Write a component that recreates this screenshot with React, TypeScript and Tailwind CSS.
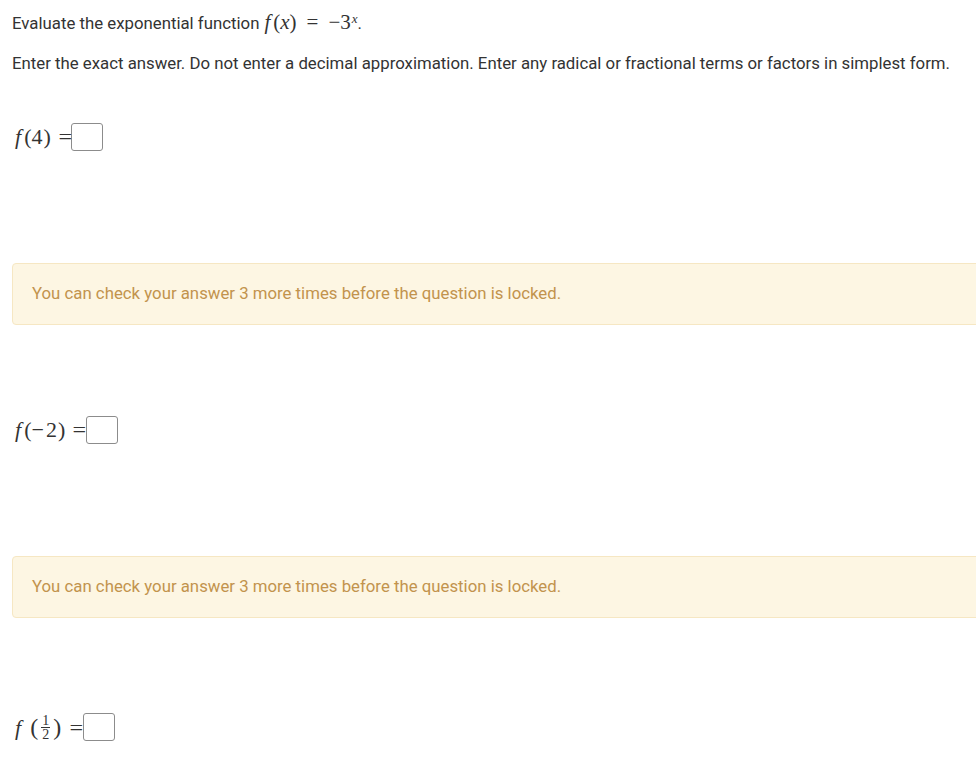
import React from 'react';

function AnswerBox() {
    return <span className="inline-block w-[32px] h-[28px] border border-[#8c8c8c] rounded-[3px] bg-white" />;
}

function Alert() {
    return (
        <div className="w-[990px] h-[62px] bg-[#fdf6e3] border border-[#f6e7c3] rounded-[4px] flex items-center pl-[19px] text-[16.8px] text-[#c2934d]">
            You can check your answer 3 more times before the question is locked.
        </div>
    );
}

function Fn({ children }: { children: React.ReactNode }) {
    return (
        <span className="flex items-center font-['Liberation_Serif',serif] text-[22px] leading-[28px] text-[#333] whitespace-pre">
            <i className="mr-[3px]">f</i>
            <span>(</span>
            <span className="tracking-[1px]">{children}</span>
            <span>)</span>
            <span className="ml-[8px] scale-x-110">=</span>
        </span>
    );
}

export default function App() {
    return (
        <div className="w-[976px] h-[763px] overflow-hidden bg-white font-['Roboto',sans-serif] text-[#333] pl-[12px]">
            <p className="pt-[11px] text-[16.8px] leading-[24px]">
                Evaluate the exponential function
                <span className="ml-[5px] font-['Liberation_Serif',serif] text-[21px] leading-[20px] whitespace-pre">
                    <i className="mr-[3px]">f</i>(<i>x</i>)<span className="mx-[10px]">=</span>−3<sup className="text-[13px] italic ml-[1px]">x</sup>
                </span>
                .
            </p>
            <p className="mt-[16px] text-[16.8px] leading-[24px]">
                Enter the exact answer. Do not enter a decimal approximation. Enter any radical or fractional terms or factors in simplest form.
            </p>

            <div className="mt-[48px] flex items-center pl-[3px]">
                <Fn>4</Fn>
                <AnswerBox />
            </div>

            <div className="mt-[112px]">
                <Alert />
            </div>

            <div className="mt-[91px] flex items-center pl-[3px]">
                <Fn>
                    <span className="mr-[1px]">−</span>2
                </Fn>
                <AnswerBox />
            </div>

            <div className="mt-[112px]">
                <Alert />
            </div>

            <div className="mt-[91px] flex items-center pl-[3px]">
                <span className="font-['Liberation_Serif',serif] text-[22px] text-[#333] flex items-center">
                    <i>f</i>
                    <span className="ml-[9px] text-[24px]">(</span>
                    <span className="inline-flex flex-col items-center text-[14px] leading-[13px] mx-[3px]">
                        <span>1</span>
                        <span className="w-[9px] border-t border-[#333]" />
                        <span>2</span>
                    </span>
                    <span className="text-[24px]">)</span>
                    <span className="ml-[9px] scale-x-110">=</span>
                </span>
                <AnswerBox />
            </div>
        </div>
    );
}
